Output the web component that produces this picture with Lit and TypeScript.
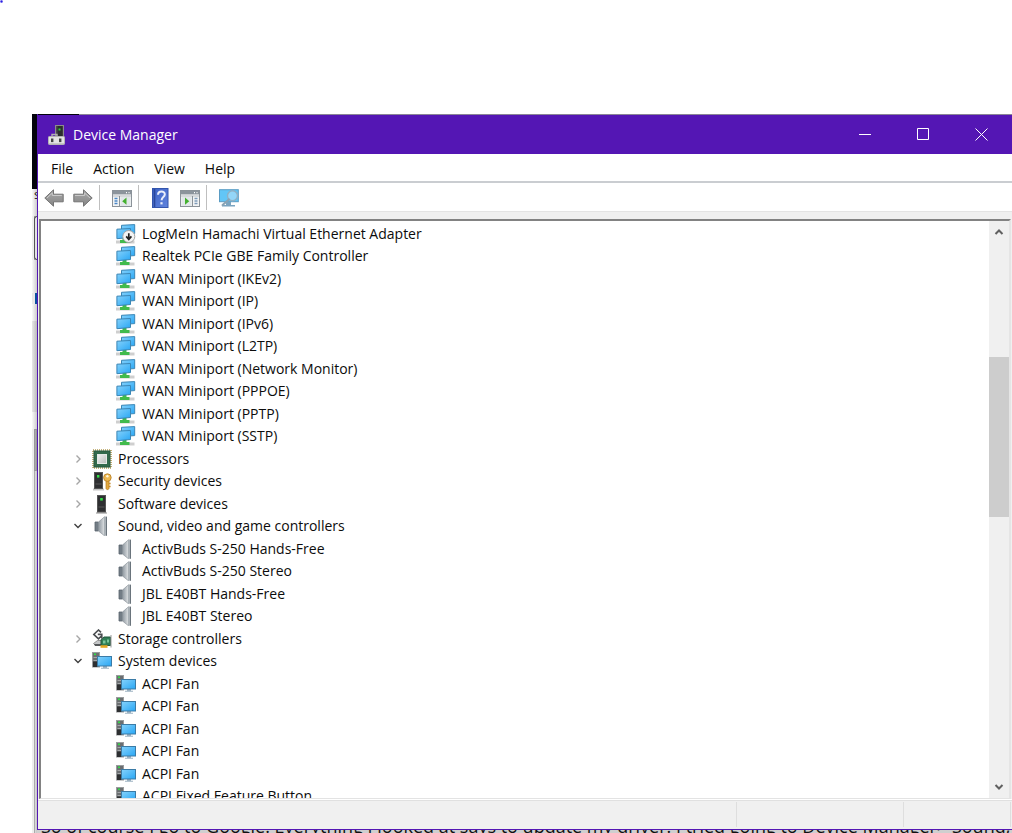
import { LitElement, html, css, svg, nothing } from "lit";
import { customElement, property, state } from "lit/decorators.js";

type IconName =
  | "manager" | "network" | "networkDisabled" | "cpu" | "security" | "software"
  | "speaker" | "storage" | "system" | "back" | "forward" | "showTree" | "help"
  | "actionPane" | "scan";

const monitors = svg`
  <path d="M0 18h18.500" stroke="#cfcfcf" stroke-width="3"/>
  <path d="M6.500 13h4v3h3v3h-9.500v-3h2.500z" fill="#41bb4c"/>
  <path d="M5.500 1.300L18.700 .6V9.600L5.500 10.500z" fill="url(#scr)" stroke="#3b86b5"/>
  <path d="M.9 5.200L14.500 4.500V13.500L.9 14.700z" fill="url(#scr)" stroke="#3b86b5"/>`;

const icons: Record<IconName, unknown> = {
  manager: svg`
    <rect x="8.500" y=".5" width="8" height="12" fill="#4c4c4e" stroke="#8b8b8b"/>
    <rect x="10.500" y="1" width="5" height="11" fill="#2c2c2e"/>
    <rect x="11.500" y="3.500" width="2" height="2" fill="#2fd03c"/>
    <path d="M5 12V9.500h5V12" fill="none" stroke="#b0b0b0" stroke-width="1.4"/>
    <rect x="1.500" y="11.500" width="16" height="8" rx=".8" fill="#e3e3e3" stroke="#b4b4b4"/>
    <rect x="4" y="13.500" width="2.400" height="3.600" fill="#444"/>
    <rect x="12" y="13.500" width="2.400" height="3.600" fill="#444"/>
    <path d="M2 18.500h15" stroke="#c4c4c4"/>`,
  network: monitors,
  networkDisabled: svg`${monitors}
    <circle cx="12.800" cy="12.500" r="6" fill="#f4f4f4" stroke="#a4a4a4"/>
    <path d="M12.800 9.200v6M10.200 12.400l2.600 3 2.600-3" fill="none" stroke="#222" stroke-width="1.7"/>`,
  cpu: svg`
    <rect x="1" y="1" width="18" height="18" fill="none" stroke="#b39a52" stroke-width="1.600" stroke-dasharray="1 1"/>
    <rect x="2" y="2" width="16" height="16" fill="#32694b" stroke="#27593f"/>
    <rect x="5.500" y="5.500" width="9" height="9" fill="url(#metal)" stroke="#e3e8e4"/>`,
  security: svg`
    <path d="M1 18.500h11" stroke="#c4c4c4" stroke-width="2"/>
    <rect x="2.500" y="1.500" width="8" height="16" fill="#2e2f31" stroke="#555"/>
    <rect x="5" y="4" width="2.400" height="2.600" fill="#32dd46"/>
    <path d="M3.500 13h6" stroke="#585858"/>
    <path d="M14 9.500h3v8l-1.500 1.600-1.500-1.600z" fill="#e3a941" stroke="#b57b20" stroke-width=".7"/>
    <path d="M17 12.500h1.600M17 15.500h1.600" stroke="#c58d2e" stroke-width="1.400"/>
    <circle cx="15.400" cy="6.600" r="3.800" fill="#edb850" stroke="#b57b20" stroke-width=".8"/>
    <circle cx="15.400" cy="5.300" r="1.200" fill="#fff7df"/>`,
  software: svg`
    <path d="M4 19h11" stroke="#c4c4c4" stroke-width="2"/>
    <rect x="5.500" y="1.500" width="8" height="16.500" fill="#2e2f31" stroke="#555"/>
    <rect x="8.200" y="4" width="2.600" height="2.600" fill="#32dd46"/>
    <path d="M6.500 13h6" stroke="#585858"/>`,
  speaker: svg`
    <path d="M3 6h3.500v9H3z" fill="#737d86" stroke="#59636c" stroke-width=".8"/>
    <path d="M6.500 6L12.500 .8V19.800L6.500 15z" fill="url(#horn)" stroke="#8b949b" stroke-width=".7"/>
    <path d="M12.500 .6H14v19.200H12.500z" fill="#aab1b7"/>
    <path d="M14.500 .6v19.200" stroke="#6a747c"/>`,
  storage: svg`
    <path d="M1.500 14.500l4-3h9l-2 5h-9z" fill="#c4c6c8" stroke="#808080" stroke-width=".8"/>
    <path d="M2 15h8v2H3z" fill="#55585a"/>
    <path d="M9 10.500l3-2.500h6.500v8.500H9z" fill="#2f7d55" stroke="#22573d"/>
    <path d="M11 11.500h2.500v3H11zM15 10.500h2v3h-2z" fill="#79c69b"/>
    <path d="M8.500 17.500h7" stroke="#e5a823" stroke-width="2.600"/>
    <path d="M19 6v12.500" stroke="#999"/>
    <path d="M9 3.400L6.500 1 1.800 5.400 6.500 9.800 9.600 6.800M5.800 5.400h4v4" fill="none" stroke="#4a4d50" stroke-width="1.600"/>`,
  system: svg`
    <rect x=".5" y="1.500" width="7" height="14.500" fill="#6b6e71" stroke="#9a9c9e"/>
    <path d="M1.500 6.500h5M1.500 9.500h5" stroke="#a3a6a8"/>
    <rect x="1" y="10.500" width="4.500" height="5.500" fill="#2d2f31"/>
    <rect x="2" y="2.500" width="2" height="1.600" fill="#32dd46"/>
    <path d="M11 15h4v1.800h2v1H9v-1h2z" fill="#9db2c2"/>
    <rect x="5.500" y="5.500" width="14" height="9.500" fill="url(#scr)" stroke="#3b7ba6"/>`,
  back: svg`<path d="M.8 10L9.500 1.800v4.400h9.700v7.600H9.500v4.400z" fill="url(#arrow)" stroke="#747474" stroke-linejoin="round"/>
    <path d="M3 10l5.300-5v2.500h9.500" fill="none" stroke="#c9c9c9"/>`,
  forward: svg`<path d="M19.200 10L10.500 1.800v4.400H.8v7.600h9.700v4.400z" fill="url(#arrow)" stroke="#747474" stroke-linejoin="round"/>
    <path d="M2 7.500h9.600V5l5.400 5" fill="none" stroke="#c9c9c9"/>`,
  showTree: svg`
    <rect x=".5" y="2.500" width="19" height="16" fill="#f3f4f5" stroke="#8b9299"/>
    <rect x="1" y="3" width="18" height="3.400" fill="#8c949c"/>
    <path d="M14 4.600h1M16.500 4.600h1" stroke="#fff" stroke-width="1.400"/>
    <path d="M1 8h18" stroke="#b9bec3"/>
    <path d="M7.500 8v10.500" stroke="#8b9299"/>
    <path d="M2.500 10.500h3M2.500 13h3M2.500 15.500h3" stroke="#4b87c8" stroke-width="1.300"/>
    <rect x="8.500" y="9" width="10" height="9" fill="#e2e7ea"/>
    <path d="M14.500 9.600v7.200L10.200 13.200z" fill="#43b02f"/>`,
  actionPane: svg`
    <rect x=".5" y="2.500" width="19" height="16" fill="#f3f4f5" stroke="#8b9299"/>
    <rect x="1" y="3" width="18" height="3.400" fill="#8c949c"/>
    <path d="M14 4.600h1M16.500 4.600h1" stroke="#fff" stroke-width="1.400"/>
    <path d="M1 8h18" stroke="#b9bec3"/>
    <path d="M12.500 8v10.500" stroke="#8b9299"/>
    <path d="M14.500 10.500h3M14.500 13h3M14.500 15.500h3" stroke="#7f9cba" stroke-width="1.300"/>
    <rect x="1.500" y="9" width="10" height="9" fill="#e2e7ea"/>
    <path d="M5 9.600v7.200l4.300-3.600z" fill="#43b02f"/>`,
  help: svg`
    <rect x="1.500" y=".5" width="15.500" height="19" fill="url(#book)" stroke="#3355ad"/>
    <path d="M3.500 1v18" stroke="#2a479b" stroke-width="1.600"/>
    <path d="M7 6.700c.2-4.200 7-4.200 6.800-.2-.1 2.600-3.200 2.600-3.200 5.700" fill="none" stroke="#e9eefb" stroke-width="2"/>
    <rect x="9.400" y="14.200" width="2.200" height="2.200" fill="#e9eefb"/>`,
  scan: svg`
    <rect x=".5" y="1.700" width="18.800" height="12" fill="#62c6f6" stroke="#5a9cc4"/>
    <path d="M7 14h5v3h4v1.500H3V17h4z" fill="#7ba4c0"/>
    <circle cx="13.500" cy="7.800" r="5" fill="#93d6f8" stroke="#8fb0c4" stroke-width="1.400"/>
    <path d="M9.800 11.500L3.600 17" stroke="#8aa3b3" stroke-width="2.200" stroke-linecap="round"/>`,
};

@customElement("dm-icon")
class DmIcon extends LitElement {
  @property() name: IconName = "network";

  static styles = css`
    :host { display: block; flex: none; width: 20px; height: 20px; }
    .art { display: block; width: 100%; height: 100%; }
  `;

  render() {
    return html`<svg class="art" viewBox="0 0 20 20" aria-hidden="true">
      <defs>
        <linearGradient id="scr" x2="1" y2="1">
          <stop offset="0" stop-color="#85d2fc"/><stop offset="1" stop-color="#28a6f4"/>
        </linearGradient>
        <linearGradient id="metal" x2="1" y2="1">
          <stop offset="0" stop-color="#f2f2f2"/><stop offset="1" stop-color="#b9bdbb"/>
        </linearGradient>
        <linearGradient id="horn" x2="1">
          <stop offset="0" stop-color="#8f98a0"/><stop offset="1" stop-color="#dfe2e4"/>
        </linearGradient>
        <linearGradient id="arrow" x2="0" y2="1">
          <stop offset="0" stop-color="#aaa"/><stop offset="1" stop-color="#858585"/>
        </linearGradient>
        <linearGradient id="book" x2="1" y2="1">
          <stop offset="0" stop-color="#3e63c6"/><stop offset="1" stop-color="#5f83dd"/>
        </linearGradient>
      </defs>
      ${icons[this.name]}
    </svg>`;
  }
}

interface TreeNode {
  label: string;
  icon: IconName;
  level: 1 | 2;
  open?: boolean;
}

const leaf = (label: string, icon: IconName): TreeNode => ({ label, icon, level: 2 });
const branch = (label: string, icon: IconName, open = false): TreeNode => ({ label, icon, level: 1, open });

const NODES: TreeNode[] = [
  leaf("LogMeIn Hamachi Virtual Ethernet Adapter", "networkDisabled"),
  leaf("Realtek PCIe GBE Family Controller", "network"),
  leaf("WAN Miniport (IKEv2)", "network"),
  leaf("WAN Miniport (IP)", "network"),
  leaf("WAN Miniport (IPv6)", "network"),
  leaf("WAN Miniport (L2TP)", "network"),
  leaf("WAN Miniport (Network Monitor)", "network"),
  leaf("WAN Miniport (PPPOE)", "network"),
  leaf("WAN Miniport (PPTP)", "network"),
  leaf("WAN Miniport (SSTP)", "network"),
  branch("Processors", "cpu"),
  branch("Security devices", "security"),
  branch("Software devices", "software"),
  branch("Sound, video and game controllers", "speaker", true),
  leaf("ActivBuds S-250 Hands-Free", "speaker"),
  leaf("ActivBuds S-250 Stereo", "speaker"),
  leaf("JBL E40BT Hands-Free", "speaker"),
  leaf("JBL E40BT Stereo", "speaker"),
  branch("Storage controllers", "storage"),
  branch("System devices", "system", true),
  leaf("ACPI Fan", "system"),
  leaf("ACPI Fan", "system"),
  leaf("ACPI Fan", "system"),
  leaf("ACPI Fan", "system"),
  leaf("ACPI Fan", "system"),
  leaf("ACPI Fixed Feature Button", "system"),
];

@customElement("dm-tree")
class DmTree extends LitElement {
  @state() nodes = NODES;

  static styles = css`
    :host { display: block; min-height: 0; overflow: hidden; background: #fff; }
    .tree { list-style: none; margin: 0; padding: 1px 0 0 30px; }
    .row { display: flex; align-items: center; height: 23px; white-space: nowrap; }
    .row:nth-child(even) { height: 22px; }
    .twisty {
      display: grid; place-items: center; flex: none; width: 14px; height: 20px;
      margin-right: 7px; padding: 0; border: 0; background: none; color: #a6a6a6;
    }
    .twisty.open { color: #404040; }
    .leaf { padding-left: 45px; }
    .label { margin-left: 6px; }
  `;

  render() {
    return html`<ul class="tree" role="tree">
      ${this.nodes.map((n) => html`
        <li class="row ${n.level === 2 ? "leaf" : ""}" role="treeitem" aria-level=${n.level}>
          ${n.level === 1
            ? html`<button class="twisty ${n.open ? "open" : ""}" aria-label=${n.open ? "Collapse" : "Expand"}>
                <svg width="10" height="10" viewBox="0 0 10 10" fill="none" stroke="currentColor" stroke-width="1.400">
                  <path d=${n.open ? "M1.500 3l3.500 3.500L8.500 3" : "M3.500 1.500L7 5 3.500 8.500"}></path>
                </svg>
              </button>`
            : nothing}
          <dm-icon name=${n.icon}></dm-icon>
          <span class="label">${n.label}</span>
        </li>`)}
    </ul>`;
  }
}

@customElement("dm-scrollbar")
class DmScrollbar extends LitElement {
  static styles = css`
    :host { display: flex; flex-direction: column; width: 20px; background: #f0f0f0; }
    .step {
      display: grid; place-items: center; flex: none; width: 20px; height: 22px;
      padding: 0; border: 0; background: none; color: #606060;
    }
    .before { flex: 114; }
    .thumb { flex: 159; background: #cdcdcd; }
    .after { flex: 259; }
  `;

  render() {
    const arrow = (d: string) => html`<svg width="10" height="10" viewBox="0 0 10 10" fill="none"
      stroke="currentColor" stroke-width="2"><path d=${d}></path></svg>`;
    return html`
      <button class="step" aria-label="Scroll up">${arrow("M1.500 7L5 3.500l3.500 3.500")}</button>
      <div class="before"></div><div class="thumb"></div><div class="after"></div>
      <button class="step" aria-label="Scroll down">${arrow("M1.500 3L5 6.500 8.500 3")}</button>`;
  }
}

@customElement("dm-window")
class DmWindow extends LitElement {
  static styles = css`
    :host {
      display: grid; grid-template-rows: auto auto auto minmax(0, 1fr) auto;
      min-width: 0; background: #f0f0f0;
      border-left: 1px solid #5416b4; border-bottom: 1px solid #5416b4;
    }
    .titlebar {
      display: flex; align-items: stretch; height: 39px; padding: 1px 2px 0 9px; color: #fff;
      background:
        linear-gradient(to right, #03030c 41px, #8a8496 41px) 0 0 / 100% 1px no-repeat,
        #5416b4;
    }
    .caption { display: flex; align-items: center; gap: 6px; flex: 1; }
    .title { font-size: 14px; font-weight: 400; margin: 0; }
    .winbtn { display: grid; place-items: center; width: 58px; padding: 0; border: 0; background: none; color: #fff; }
    .menubar {
      display: flex; align-items: center; height: 25px; padding-left: 3px; padding-top: 2px;
      background: #fff; border-bottom: 2px solid #cacdd1;
    }
    .menu { padding: 0 10px; border: 0; background: none; font: inherit; color: inherit; }
    .toolbar {
      display: flex; align-items: center; gap: 1px; height: 28px; padding: 1px 2px 0 2px;
      box-sizing: border-box; min-height: 29px;
      background: #fff; border-bottom: 1px solid #e4e4e4;
    }
    .tool { display: grid; place-items: center; width: 28px; height: 26px; padding: 0; border: 0; background: none; }
    .sep { width: 1px; height: 25px; margin: 0 7px 0 1px; background: #bfbfbf; }
    .client {
      display: grid; grid-template-columns: minmax(0, 1fr) auto; grid-template-rows: minmax(0, 1fr);
      margin: 7px 1px 0 1px;
      border: 2px solid #828282; border-right-color: #e5e5e5; border-bottom: 1px solid #e3e3e3;
    }
    .status {
      display: grid; grid-template-columns: 1fr 165px 105px; gap: 2px; height: 25px;
      padding: 2px 1px 2px 0; border-top: 1px solid #fff; box-shadow: inset 0 1px #e0e0e0;
    }
    .cell { border-right: 1px solid #dedede; }
  `;

  render() {
    const tool = (name: IconName, label: string) =>
      html`<button class="tool" aria-label=${label}><dm-icon name=${name}></dm-icon></button>`;
    const win = (label: string, d: string) => html`<button class="winbtn" aria-label=${label}>
      <svg width="13" height="13" viewBox="0 0 13 13" fill="none" stroke="currentColor"><path d=${d}></path></svg>
    </button>`;
    return html`
      <header class="titlebar">
        <div class="caption"><dm-icon name="manager"></dm-icon><h1 class="title">Device Manager</h1></div>
        ${win("Minimize", "M0 6.500h12")}
        ${win("Maximize", "M.5 .5h11v11h-11z")}
        ${win("Close", "M.5 .5l12 12M12.500 .5l-12 12")}
      </header>
      <nav class="menubar">
        ${["File", "Action", "View", "Help"].map((m) => html`<button class="menu">${m}</button>`)}
      </nav>
      <div class="toolbar" role="toolbar">
        ${tool("back", "Back")}${tool("forward", "Forward")}
        <span class="sep"></span>
        ${tool("showTree", "Show/Hide Console Tree")}
        <span class="sep"></span>
        ${tool("help", "Help")}${tool("actionPane", "Show/Hide Action Pane")}
        <span class="sep"></span>
        ${tool("scan", "Scan for hardware changes")}
      </div>
      <div class="client"><dm-tree></dm-tree><dm-scrollbar></dm-scrollbar></div>
      <footer class="status"><div class="cell"></div><div class="cell"></div><div class="cell"></div></footer>`;
  }
}

@customElement("app-root")
class AppRoot extends LitElement {
  static styles = css`
    :host {
      display: grid; grid-template-columns: 5px minmax(0, 1fr);
      grid-template-rows: 114px minmax(0, 1fr) 3px;
      box-sizing: border-box; height: 100vh; padding-left: 32px; overflow: hidden;
      background: #fff; color: #0c0c0c;
      font: 14px/20px "Open Sans", "Noto Sans", sans-serif;
      position: relative;
    }
    .dot { position: absolute; left: 0; top: 0; width: 3px; height: 3px; background: radial-gradient(#2a1ee0 30%, #c9c6fb 70%); }
    .top { grid-column: 1 / -1; }
    .edge {
      display: flex; flex-direction: column; grid-row: 2 / 4; overflow: hidden;
      background: linear-gradient(to right, #eee 2px, #aaa 2px, #aaa 3px, #ddd 3px, #c4c4c4);
    }
    .dark { flex: none; height: 75px; background: #03030c; }
    .page { flex: none; height: 27px; padding-left: 2px; background: linear-gradient(to right, #fafafa, #ccc); font-size: 13px; line-height: 10px; color: #222; overflow: hidden; }
    .field { flex: none; height: 42px; margin-left: 2px; border: 1px solid #555; border-right: 0; border-radius: 3px 0 0 3px; background: #e4e4e4; }
    .gap { flex: none; height: 33px; background: linear-gradient(to right, #fafafa, #ccc); }
    .link { flex: none; height: 11px; border-left: 3px solid #e8e8e8; background: #0b4fa0; }
    .strip { flex: none; height: 17px; background: linear-gradient(to right, #fafafa, #ccc); }
    .panel { flex: none; height: 91px; background: linear-gradient(to right, #e8e8e8, #bbb); }
    .box { flex: none; height: 40px; margin-left: 2px; border: 1px solid #999; background: #aaa; }
    .below { overflow: hidden; background: #cfcfcf; }
    .sentence { margin: -14px 0 0 4px; font-size: 18px; line-height: 20px; white-space: nowrap; color: #111; }
  `;

  render() {
    return html`
      <span class="dot"></span>
      <div class="top"></div>
      <div class="edge">
        <div class="dark"></div><div class="page">s</div><div class="field"></div>
        <div class="gap"></div><div class="link"></div><div class="strip"></div>
        <div class="panel"></div><div class="strip"></div><div class="box"></div>
      </div>
      <dm-window></dm-window>
      <div class="below">
        <p class="sentence">So of course I go to Google. Everything I looked at says to update my driver. I tried going to Device Manager&gt; Sound,</p>
      </div>`;
  }
}
